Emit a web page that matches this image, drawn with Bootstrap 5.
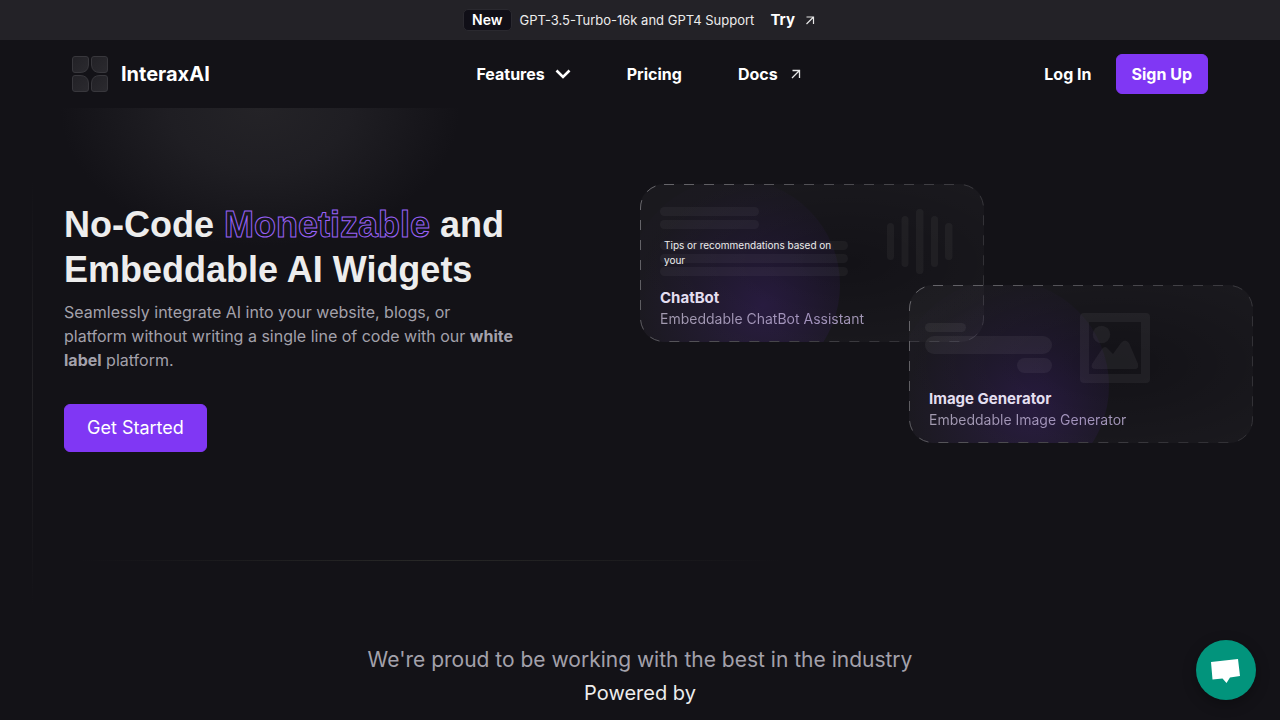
<!DOCTYPE html>
<html lang="en" data-bs-theme="dark">
<head>
<meta charset="utf-8">
<meta name="viewport" content="width=device-width, initial-scale=1">
<title>InteraxAI</title>
<link href="https://cdn.jsdelivr.net/npm/bootstrap@5.3.0/dist/css/bootstrap.min.css" rel="stylesheet">
<style>
  body { background: #131217; color: #ededed; font-family: Inter, sans-serif; overflow-x: hidden; }
  a { color: #fff; text-decoration: none; }
  .announce { min-height: 40px; background: #232227; font-size: 13px; line-height: 20px; color: #ededed; }
  .tag-new { background: #100f17; border: 1px solid #2a292f; border-radius: 5px; font-size: 14px; font-weight: 600; line-height: 20px; color: #fff; }
  .try-link { font-size: 15px; }
  .site-nav { min-height: 68px; padding: 0 72px; line-height: 24px; }
  .site-nav .btn { font-weight: 700; color: #fff; line-height: 24px; }
  .main-links { gap: 56px; }
  .with-icon { gap: 10px; }
  .brand-name { margin-left: 13px; font-size: 20px; font-weight: 700; line-height: 28px; }
  .btn-violet { --bs-btn-color: #fff; --bs-btn-bg: #8037f4; --bs-btn-border-color: #8037f4; --bs-btn-hover-color: #fff; --bs-btn-hover-bg: #6f28e0; --bs-btn-hover-border-color: #6f28e0; border-radius: 6px; }
  .site-nav .btn-violet { padding: 7px 15px; }
  .hero { min-height: 500px; background: radial-gradient(ellipse 200px 138px at 260px 0, #242327 0%, #1f1e23 45%, #131217 100%) no-repeat; }
  .hero::before { content: ""; position: absolute; left: 32px; top: 70px; bottom: 0; width: 1px; background: linear-gradient(transparent, #242327 50%, transparent); }
  .hero::after { content: ""; position: absolute; left: 80px; right: 500px; top: 452px; height: 1px; background: linear-gradient(90deg, transparent, #282827 50%, transparent); }
  .hero-copy { padding: 94px 0 0 64px; }
  .hero h1 { font: 700 36px/45px "Liberation Sans", sans-serif; color: #ededed; }
  .outlined { color: transparent; -webkit-text-stroke: 1px #9a62f8; }
  .lede { max-width: 460px; margin-bottom: 32px; line-height: 24px; color: #a3a1ab; }
  .hero .btn-violet { font-size: 18px; line-height: 24px; padding: 11px 22px; }
  .widgets { padding-top: 76px; }
  .widget { width: 344px; height: 158px; padding: 0 20px 12px; }
  .widget + .widget { margin: -57px 0 0 269px; }
  .widget-art { position: absolute; inset: 0; width: 100%; height: 100%; }
  .widget-tip { width: 180px; margin: 0 4px 20px; font-size: 10px; line-height: 15px; color: #ededed; }
  .widget h2 { font-size: 15px; font-weight: 700; line-height: 20px; color: #e4dff0; }
  .widget-sub { font-size: 14px; line-height: 22px; color: transparent; background: linear-gradient(90deg, #a39bb0, #a292bd 50%, #a3a1a5); -webkit-background-clip: text; background-clip: text; }
  .partners { padding-top: 37px; font-size: 21px; line-height: 30px; color: #a3a1ab; }
  .powered { font-size: 20px; line-height: 28px; color: #ededed; }
  .chat-btn { position: fixed; right: 24px; bottom: 20px; width: 60px; height: 60px; background: #02947c; box-shadow: 0 4px 14px rgba(0,0,0,.3); }
</style>
</head>
<body>
<div class="announce d-flex align-items-center justify-content-center">
  <span class="tag-new px-2 me-2">New</span>
  <span class="me-3">GPT-3.5-Turbo-16k and GPT4 Support</span>
  <a href="#try" class="try-link fw-bold d-flex align-items-center gap-2">Try
    <svg width="14" height="14" viewBox="0 0 14 14" fill="none" stroke="#e6e6e6" stroke-width="1.2"><path d="M3.500 4H10.500V11M10.500 4L3.500 11"/></svg>
  </a>
</div>

<nav class="site-nav d-flex align-items-center" aria-label="Main">
  <div class="col d-flex">
    <a href="#" class="d-flex align-items-center">
      <svg width="36" height="36" viewBox="0 0 36 36" aria-hidden="true">
        <defs><linearGradient id="tile" x2="1" y2="1"><stop stop-color="#222126"/><stop offset="1" stop-color="#2b2a2f"/></linearGradient></defs>
        <g fill="url(#tile)" stroke="#38373c">
          <path d="M3 .5H14Q16.500 .5 16.500 3V9Q16 16.500 8 16.500H3Q.5 16.500 .5 14V3Q.5 .5 3 .5Z"/>
          <path d="M22 .5H33Q35.500 .5 35.500 3V14Q35.500 16.500 33 16.500H28Q20 16.500 19.500 9V3Q19.500 .5 22 .5Z"/>
          <path d="M3 19.500H8Q16 19.500 16.500 27V33Q16.500 35.500 14 35.500H3Q.5 35.500 .5 33V22Q.5 19.500 3 19.500Z"/>
          <path d="M28 19.500H33Q35.500 19.500 35.500 22V33Q35.500 35.500 33 35.500H22Q19.500 35.500 19.500 33V27Q20 19.500 28 19.500Z"/>
        </g>
      </svg>
      <span class="brand-name">InteraxAI</span>
    </a>
  </div>
  <div class="main-links d-flex align-items-center">
    <button type="button" class="btn border-0 p-0 with-icon d-flex align-items-center">Features
      <svg width="16" height="16" viewBox="0 0 16 16" fill="none" stroke="#fff" stroke-width="2.600"><path d="M1.500 4.500L8 11L14.500 4.500"/></svg>
    </button>
    <a href="#pricing" class="fw-bold">Pricing</a>
    <a href="#docs" class="fw-bold with-icon d-flex align-items-center">Docs
      <svg width="16" height="16" viewBox="0 0 16 16" fill="none" stroke="#e6e6e6" stroke-width="1.300"><path d="M4.500 4.500H11.500V12M11.500 4.500L4 12"/></svg>
    </a>
  </div>
  <div class="col d-flex justify-content-end align-items-center gap-4">
    <a href="#login" class="fw-bold">Log In</a>
    <button type="button" class="btn btn-violet">Sign Up</button>
  </div>
</nav>

<main>
  <section class="hero row g-0 position-relative">
    <div class="col-6 hero-copy">
      <h1 class="mb-2">No-Code <span class="outlined">Monetizable</span> and<br>Embeddable AI Widgets</h1>
      <p class="lede">Seamlessly integrate AI into your website, blogs, or<br>platform without writing a single line of code with our <b>white label</b> platform.</p>
      <button type="button" class="btn btn-violet">Get Started</button>
    </div>
    <div class="col-6 widgets">
      <article class="widget position-relative d-flex flex-column justify-content-end">
        <svg class="widget-art" viewBox="0 0 344 158" aria-hidden="true">
          <defs>
            <clipPath id="cardShape"><rect width="344" height="158" rx="24"/></clipPath>
            <linearGradient id="edge" x2="1" y2=".3"><stop stop-color="#69686d"/><stop offset="1" stop-color="#323136"/></linearGradient>
            <radialGradient id="sheen" cx=".6" cy=".5" r=".6"><stop stop-color="#fff" stop-opacity="0"/><stop offset="1" stop-color="#fff" stop-opacity=".03"/></radialGradient>
            <radialGradient id="glow" gradientUnits="userSpaceOnUse" cx="123" cy="122" r="125"><stop stop-color="#7a35f0" stop-opacity=".17"/><stop offset=".5" stop-color="#7a35f0" stop-opacity=".08"/><stop offset="1" stop-color="#7a35f0" stop-opacity=".01"/></radialGradient>
          </defs>
          <g clip-path="url(#cardShape)"><rect width="344" height="158" fill="url(#sheen)"/><circle cx="94" cy="101" r="106" fill="url(#glow)"/></g>
          <rect x=".5" y=".5" width="343" height="157" rx="23.500" fill="none" stroke="url(#edge)" stroke-dasharray="10 10"/>
          <g fill="#fff" fill-opacity=".045">
            <rect x="20" y="23" width="99" height="9" rx="4.500"/><rect x="20" y="36" width="99" height="9" rx="4.500"/>
            <rect x="20" y="57" width="188" height="9" rx="4.500"/><rect x="20" y="70" width="188" height="9" rx="4.500"/><rect x="20" y="83" width="188" height="9" rx="4.500"/>
            <rect x="247" y="39" width="7" height="37" rx="3.500"/><rect x="261.500" y="32" width="7" height="51" rx="3.500"/><rect x="276" y="25" width="7.500" height="65" rx="3.500"/><rect x="291" y="32" width="7" height="51" rx="3.500"/><rect x="305" y="39" width="7.500" height="37" rx="3.500"/>
          </g>
        </svg>
        <p class="widget-tip position-relative">Tips or recommendations based on your</p>
        <h2 class="position-relative mb-0">ChatBot</h2>
        <p class="widget-sub position-relative mb-0">Embeddable ChatBot Assistant</p>
      </article>
      <article class="widget position-relative d-flex flex-column justify-content-end">
        <svg class="widget-art" viewBox="0 0 344 158" aria-hidden="true">
          <g clip-path="url(#cardShape)"><rect width="344" height="158" fill="url(#sheen)"/><circle cx="94" cy="101" r="106" fill="url(#glow)"/></g>
          <rect x=".5" y=".5" width="343" height="157" rx="23.500" fill="none" stroke="url(#edge)" stroke-dasharray="10 10"/>
          <g fill="#fff" fill-opacity=".055">
            <rect x="16" y="38" width="41" height="9" rx="4.500"/><rect x="16" y="51" width="127" height="18" rx="9"/><rect x="108" y="73" width="35" height="15" rx="7.500"/>
            <path fill-rule="evenodd" d="M175 28H237Q241 28 241 32V94Q241 98 237 98H175Q171 98 171 94V32Q171 28 175 28ZM180 37V89H232V37Z"/>
            <circle cx="192.500" cy="49.500" r="8.700"/>
            <path d="M183 79L193 64Q196 60 199 64L204 69L212 58Q216 53 220 58L229 79Q230 84 226 84H187Q181 84 183 79Z"/>
          </g>
        </svg>
        <h2 class="position-relative mb-0">Image Generator</h2>
        <p class="widget-sub position-relative mb-0">Embeddable Image Generator</p>
      </article>
    </div>
  </section>
  <section class="partners text-center">
    <p class="mb-1">We're proud to be working with the best in the industry</p>
    <p class="powered mb-3">Powered by</p>
  </section>
</main>

<button type="button" class="chat-btn btn border-0 rounded-circle p-0" aria-label="Open chat">
  <svg width="60" height="60" viewBox="0 0 60 60" fill="#fff"><path d="M15 22L42 19L44 36L34 37.500L30.500 43L26.500 38.500L16.500 39.500Z"/></svg>
</button>
<script src="https://cdn.jsdelivr.net/npm/bootstrap@5.3.0/dist/js/bootstrap.bundle.min.js"></script>
</body>
</html>
